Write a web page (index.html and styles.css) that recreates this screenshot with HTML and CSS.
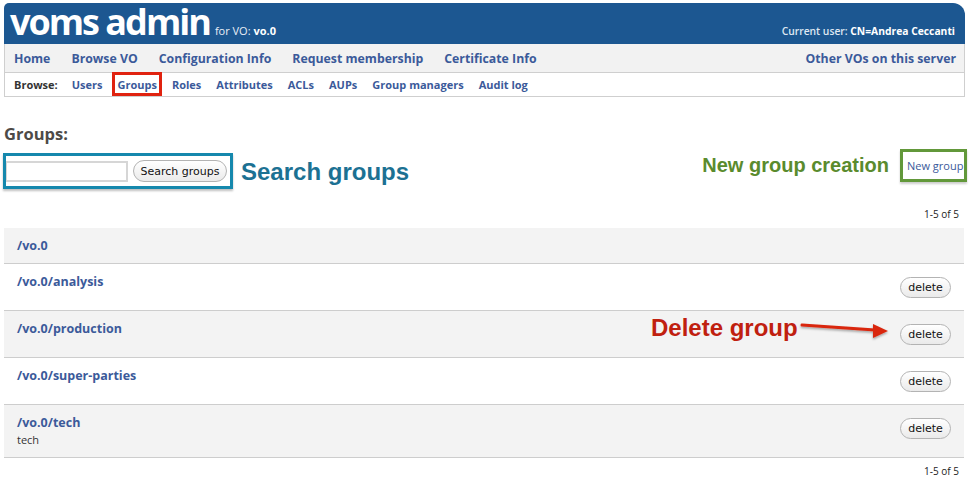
FILE: index.html
```html
<!DOCTYPE html>
<html lang="en">
<head>
<meta charset="utf-8">
<title>VOMS Admin - Groups</title>
<link rel="stylesheet" href="styles.css">
</head>
<body>
<div class="page">
  <header class="masthead">
    <div class="brand">
      <span class="logo">voms admin</span>
      <span class="vo">for VO: <b>vo.0</b></span>
    </div>
    <div class="user">Current user: <b>CN=Andrea Ceccanti</b></div>
  </header>

  <nav class="mainnav">
    <div class="mainlinks">
      <a href="#">Home</a>
      <a href="#">Browse VO</a>
      <a href="#">Configuration Info</a>
      <a href="#">Request membership</a>
      <a href="#">Certificate Info</a>
    </div>
    <a href="#">Other VOs on this server</a>
  </nav>

  <nav class="subnav">
    <span class="label">Browse:</span>
    <a href="#">Users</a>
    <a href="#" class="current">Groups</a>
    <a href="#">Roles</a>
    <a href="#">Attributes</a>
    <a href="#">ACLs</a>
    <a href="#">AUPs</a>
    <a href="#">Group managers</a>
    <a href="#">Audit log</a>
  </nav>

  <main class="content">
    <h2 class="title">Groups:</h2>

    <div class="toolbar">
      <div class="search-area">
        <form class="search-box">
          <input type="text" class="search-input">
          <button type="button" class="btn">Search groups</button>
        </form>
        <span class="annot annot-blue">Search groups</span>
      </div>
      <div class="create-area">
        <span class="annot annot-green">New group creation</span>
        <a href="#" class="new-group">New group</a>
      </div>
    </div>

    <div class="pager">1-5 of 5</div>

    <div class="groups">
      <div class="row shaded">
        <div class="info"><a href="#" class="gname">/vo.0</a></div>
      </div>
      <div class="row">
        <div class="info"><a href="#" class="gname">/vo.0/analysis</a></div>
        <button type="button" class="btn del">delete</button>
      </div>
      <div class="row shaded annotated">
        <div class="info"><a href="#" class="gname">/vo.0/production</a></div>
        <button type="button" class="btn del">delete</button>
        <span class="annot annot-red">Delete group</span>
        <svg class="arrow" width="94" height="24" viewBox="0 0 94 24">
          <defs>
            <filter id="sh" x="-10%" y="-50%" width="120%" height="200%">
              <feDropShadow dx="0" dy="1.5" stdDeviation="1" flood-color="#000" flood-opacity="0.35"/>
            </filter>
          </defs>
          <g filter="url(#sh)">
            <line x1="4" y1="6" x2="77" y2="11" stroke="#d9260f" stroke-width="3" stroke-linecap="round"/>
            <polygon points="75,5 90,12 75,19" fill="#d9260f"/>
          </g>
        </svg>
      </div>
      <div class="row">
        <div class="info"><a href="#" class="gname">/vo.0/super-parties</a></div>
        <button type="button" class="btn del">delete</button>
      </div>
      <div class="row shaded">
        <div class="info">
          <a href="#" class="gname">/vo.0/tech</a>
          <div class="desc">tech</div>
        </div>
        <button type="button" class="btn del">delete</button>
      </div>
    </div>

    <div class="pager bottom">1-5 of 5</div>
  </main>
</div>
</body>
</html>
```

FILE: styles.css
```css
* { box-sizing: border-box; }

body {
  margin: 0;
  background: #ffffff;
  font-family: "Open Sans", "DejaVu Sans", sans-serif;
  color: #222;
}

a { text-decoration: none; color: #3b5a9a; }

.page {
  padding: 3px 4px 0 4px;
}

/* header */
.masthead {
  height: 41px;
  background: #1c5791;
  border-radius: 5px 12px 0 0;
  display: flex;
  justify-content: space-between;
  align-items: baseline;
  padding: 0 10px 0 6px;
  color: #fff;
}
.brand {
  display: flex;
  align-items: baseline;
}
.logo {
  font-weight: 700;
  font-size: 36px;
  line-height: 38px;
  letter-spacing: -2px;
  padding-right: 2px;
}
.vo {
  font-size: 11px;
  margin-left: 3px;
  color: #e8eef6;
}
.vo b { color: #fff; }
.user {
  font-size: 10.3px;
  font-weight: 600;
  color: #dfe7f2;
}
.user b { color: #fff; font-weight: 700; }

/* main nav */
.mainnav {
  height: 29px;
  background: #f2f2f2;
  border-left: 1px solid #cfcfcf;
  border-right: 1px solid #cfcfcf;
  border-bottom: 1px solid #cfcfcf;
  display: flex;
  justify-content: space-between;
  align-items: center;
  padding: 0 8px 0 9px;
  font-size: 12.3px;
  font-weight: 700;
}
.mainlinks {
  display: flex;
  gap: 21px;
}

/* sub nav */
.subnav {
  height: 24px;
  border-left: 1px solid #cfcfcf;
  border-right: 1px solid #cfcfcf;
  border-bottom: 1px solid #cfcfcf;
  display: flex;
  align-items: stretch;
  gap: 15px;
  padding: 0 9px;
  font-size: 11px;
  font-weight: 700;
}
.subnav .label,
.subnav a {
  display: flex;
  align-items: center;
}
.subnav .label { color: #333; margin-right: -1px; }
.subnav .current {
  border: 3px solid #e0220f;
  padding: 0 2px;
  margin: -1px -5px 0 -5px;
}

/* content */
.title {
  margin: 27px 0 0 0;
  font-size: 16.5px;
  line-height: 20px;
  font-weight: 700;
  color: #4d4a47;
}

.toolbar {
  margin-top: 5px;
  display: flex;
  justify-content: space-between;
  align-items: flex-start;
}
.search-area {
  display: flex;
  align-items: center;
  margin-top: 4px;
  margin-left: -1px;
}
.search-box {
  margin: 0;
  display: flex;
  align-items: center;
  gap: 5px;
  height: 36px;
  padding: 0 3px 0 0;
  border: 3px solid #1588ad;
  box-shadow: 0 2px 2px rgba(0,0,0,0.25);
}
.search-input {
  width: 122px;
  height: 21px;
  margin: 0;
  border: 2px solid #d6d6d6;
  border-left-width: 1px;
  background: #fff;
  padding: 0;
}
.btn {
  font-family: "DejaVu Sans", sans-serif;
  font-size: 11px;
  color: #111;
  background: linear-gradient(#ffffff, #eaeaea);
  border: 1px solid #b3b3b3;
  border-radius: 11px;
  height: 21px;
  padding: 0 8px;
  margin: 0;
}
.search-box .btn { width: 94px; height: 22px; padding: 0; }

.annot {
  font-family: "Liberation Sans", Arial, sans-serif;
  font-weight: 700;
  white-space: nowrap;
}
.annot-blue {
  font-size: 24px;
  color: #1c7193;
  margin-left: 8px;
  margin-top: 1px;
}
.create-area {
  display: flex;
  align-items: center;
  margin-right: -2px;
}
.annot-green {
  font-size: 20px;
  color: #5a8b2d;
  margin-right: 11px;
}
.new-group {
  display: block;
  height: 33px;
  width: 67px;
  border: 3px solid #62983a;
  box-shadow: 0 2px 2px rgba(0,0,0,0.2);
  font-size: 11px;
  line-height: 27px;
  padding-left: 4px;
  white-space: nowrap;
  color: #3b5a9a;
}

.pager {
  margin-top: 18px;
  margin-bottom: 7px;
  text-align: right;
  font-size: 10px;
  line-height: 14px;
  padding-right: 6px;
  color: #222;
}
.pager.bottom { margin-top: 6px; }

.groups {
  display: flex;
  flex-direction: column;
  margin-right: 1px;
}
.row {
  display: flex;
  justify-content: space-between;
  align-items: flex-start;
  padding: 10px 13px 9px 13px;
  border-bottom: 1px solid #cdcdcd;
  background: #fff;
}
.row.shaded { background: #f3f3f3; }
.gname {
  display: block;
  font-size: 12.5px;
  font-weight: 700;
  line-height: 16px;
}
.desc {
  font-size: 11px;
  line-height: 17px;
  color: #333;
}
.btn.del {
  margin: 3px 0 3px 0;
  width: 51px;
  padding: 0;
}
.annotated { position: relative; }
.annot-red {
  position: absolute;
  left: 647px;
  top: 3px;
  font-size: 24px;
  line-height: 28px;
  color: #c0200f;
}
.arrow {
  position: absolute;
  left: 794px;
  top: 8px;
}
```
